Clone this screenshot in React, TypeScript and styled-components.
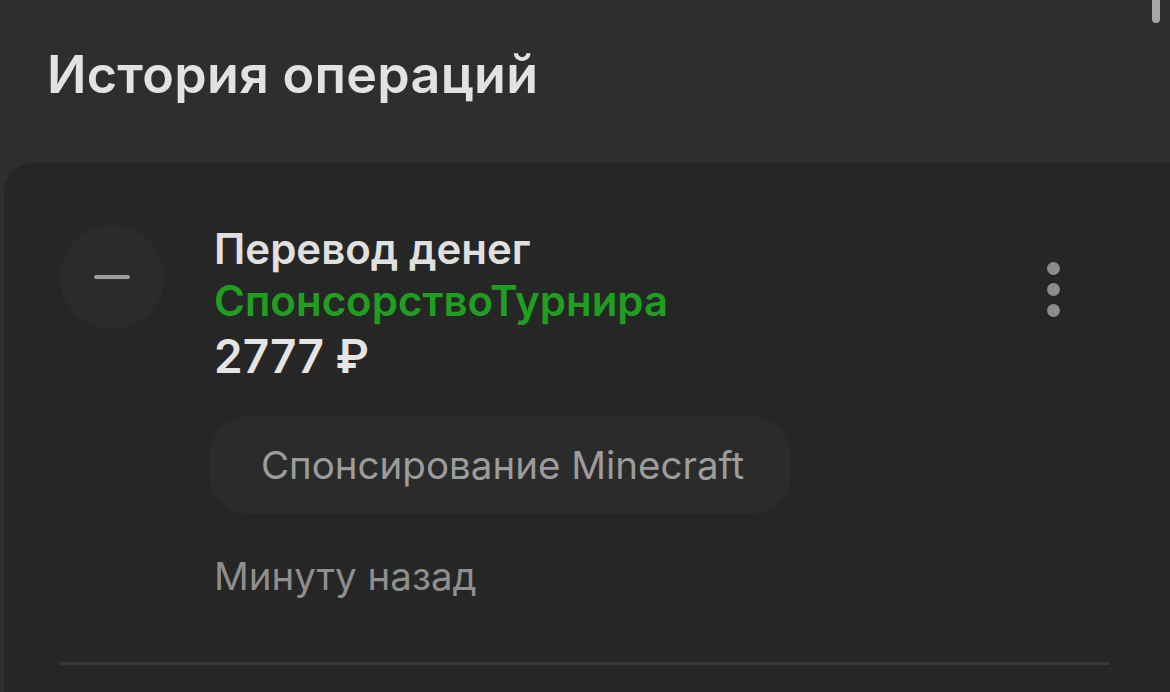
import styled, { createGlobalStyle } from "styled-components";

const GlobalStyle = createGlobalStyle`
  html, body {
    margin: 0;
    padding: 0;
    background: #2e2e2e;
    font-family: Inter, Roboto, "Noto Sans", sans-serif;
    overflow: hidden;
  }
`;

const Screen = styled.div`
  position: relative;
  width: 1170px;
  height: 692px;
  background: #2e2e2e;
  display: flex;
  flex-direction: column;
  overflow: hidden;
`;

const ScrollThumb = styled.div`
  position: absolute;
  top: 0;
  right: 10px;
  width: 8px;
  height: 23px;
  background: #a8a8a8;
  border-radius: 0 0 4px 4px;
`;

const Title = styled.h1`
  margin: 0;
  padding: 0 0 0 47px;
  height: 163px;
  line-height: 150px;
  box-sizing: border-box;
  font-size: 52px;
  font-weight: 600;
  color: #e2e2e2;
  letter-spacing: 0.3px;
`;

const Card = styled.div`
  flex: 1;
  margin-left: 4px;
  background: #262626;
  border-radius: 28px 0 0 0;
  padding: 60px 60px 0 56px;
  display: flex;
  flex-direction: column;
`;

const Row = styled.div`
  display: flex;
  align-items: flex-start;
`;

const IconCircle = styled.div`
  width: 104px;
  height: 104px;
  border-radius: 50%;
  background: #2b2b2b;
  display: flex;
  align-items: center;
  justify-content: center;
  flex-shrink: 0;
  margin-top: 2px;
`;

const Minus = styled.div`
  width: 36px;
  height: 4px;
  border-radius: 2px;
  background: #9c9c9c;
`;

const Body = styled.div`
  flex: 1;
  margin-left: 50px;
  display: flex;
  flex-direction: column;
`;

const Head = styled.div<{ $green?: boolean }>`
  font-size: 42px;
  font-weight: 600;
  line-height: 52px;
  color: ${(p) => (p.$green ? "#1f9e1f" : "#e0e0e0")};
`;

const Amount = styled.div`
  font-size: 46px;
  font-weight: 600;
  line-height: 58px;
  color: #e4e4e4;
`;

const Pill = styled.div`
  align-self: flex-start;
  margin-top: 31px;
  margin-left: -5px;
  padding: 0 47px 0 52px;
  height: 98px;
  display: flex;
  align-items: center;
  background: #2b2b2b;
  border-radius: 40px;
  font-size: 38.5px;
  color: #9c9c9c;
`;

const Time = styled.div`
  margin-top: 39px;
  font-size: 38.5px;
  color: #8e8e8e;
`;

const Dots = styled.div`
  display: flex;
  flex-direction: column;
  gap: 8px;
  margin-top: 39px;
  margin-right: 50px;
`;

const Dot = styled.div`
  width: 13px;
  height: 13px;
  border-radius: 50%;
  background: #8c8c8c;
`;

const Divider = styled.div`
  margin-top: 63px;
  height: 3px;
  background: #393939;
`;

export default function App() {
  return (
    <Screen>
      <GlobalStyle />
      <ScrollThumb />
      <Title>История операций</Title>
      <Card>
        <Row>
          <IconCircle>
            <Minus />
          </IconCircle>
          <Body>
            <Head>Перевод денег</Head>
            <Head $green>СпонсорствоТурнира</Head>
            <Amount>2777 ₽</Amount>
            <Pill>Спонсирование Minecraft</Pill>
            <Time>Минуту назад</Time>
          </Body>
          <Dots>
            <Dot />
            <Dot />
            <Dot />
          </Dots>
        </Row>
        <Divider />
      </Card>
    </Screen>
  );
}
